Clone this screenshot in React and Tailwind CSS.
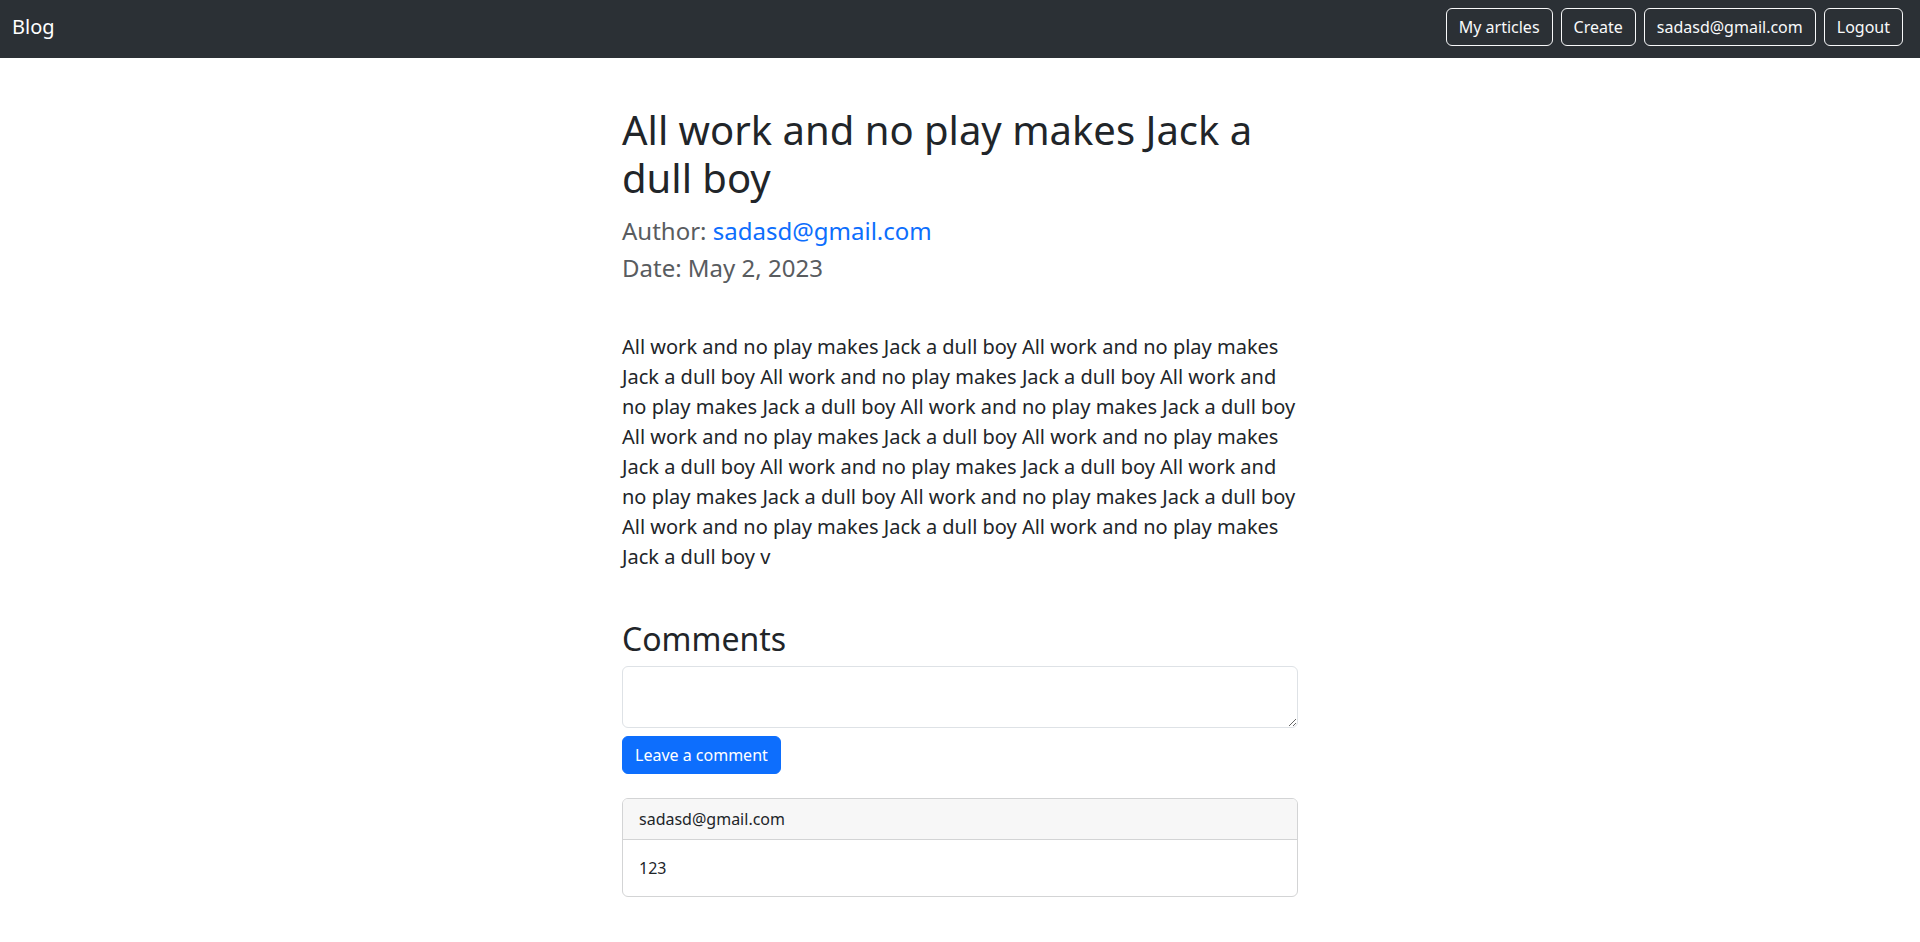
import React from "react";

const navButtons = ["My articles", "Create", "sadasd@gmail.com", "Logout"];

const paragraph = Array(12)
  .fill("All work and no play makes Jack a dull boy")
  .join(" ");

const App = () => {
  return (
    <div
      className="min-h-screen bg-white text-[#212529]"
      style={{ fontFamily: '"Noto Sans", "Open Sans", sans-serif' }}
    >
      {/* navbar */}
      <nav className="h-[58px] bg-[#2b3035] pl-3 pr-[17px] pt-2 pb-3 flex items-start justify-between">
        <a href="#" className="py-1 text-xl leading-[30px] text-white">
          Blog
        </a>
        <div className="flex gap-2">
          {navButtons.map((label) => (
            <button
              key={label}
              className="h-[38px] px-3 border border-[#f8f9fa] rounded-md text-base leading-6 text-[#f8f9fa]"
            >
              {label}
            </button>
          ))}
        </div>
      </nav>

      {/* article */}
      <main className="w-[676px] mx-auto pt-12 pb-10">
        <h1 className="text-[40px] leading-[48px] mb-[15px]">
          All work and no play makes Jack a dull boy
        </h1>
        <h4 className="text-2xl leading-[28.8px] text-[#595c5f] mb-2">
          Author:{" "}
          <a href="#" className="text-[#0d6efd]">
            sadasd@gmail.com
          </a>
        </h4>
        <h4 className="text-2xl leading-[28.8px] text-[#595c5f] mb-[49px]">
          Date: May 2, 2023
        </h4>
        <p className="text-xl leading-[30px] mb-12">{paragraph} v</p>

        <h2 className="text-[32px] leading-[38.4px] mb-2">Comments</h2>
        <textarea className="block w-full h-[62px] px-3 py-1.5 border border-[#dee2e6] rounded-md text-base leading-6 outline-none" />
        <button className="mt-2 h-[38px] px-3 bg-[#0d6efd] border border-[#0d6efd] rounded-md text-base leading-6 text-white">
          Leave a comment
        </button>

        <div className="mt-6 border border-[#d3d4d5] rounded-md overflow-hidden">
          <div className="px-4 py-2 leading-6 bg-[#f7f7f7] border-b border-[#d3d4d5]">
            sadasd@gmail.com
          </div>
          <div className="p-4 leading-6">123</div>
        </div>
      </main>
    </div>
  );
};

export default App;
